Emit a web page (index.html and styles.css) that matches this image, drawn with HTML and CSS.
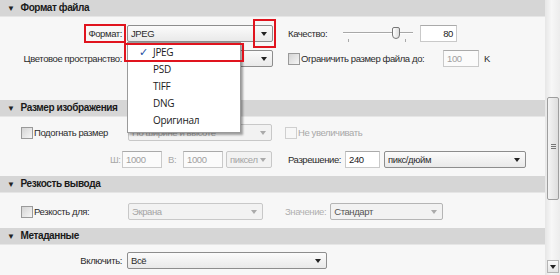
FILE: index.html
```html
<!DOCTYPE html>
<html lang="ru">
<head>
    <meta charset="UTF-8">
    <title>Экспорт</title>
    <link rel="stylesheet" href="styles.css">
</head>
<body>
    <div class="panel">
        <div class="sections">
            <!-- Формат файла -->
            <div class="sec">
                <div class="sec-head"><span class="tri">&#9660;</span>Формат файла</div>
                <div class="sec-body body-format">
                    <div class="row">
                        <div class="lbl"><span class="mark">Формат:</span></div>
                        <div class="combo w-146">
                            <span>JPEG</span><i class="arr"></i>
                            <div class="arr-mark"></div>
                            <ul class="list">
                                <li class="sel"><span class="chk">&#10003;</span>JPEG</li>
                                <li>PSD</li>
                                <li>TIFF</li>
                                <li>DNG</li>
                                <li>Оригинал</li>
                            </ul>
                        </div>
                        <div class="right">
                            <span class="rlbl">Качество:</span>
                            <div class="slider">
                                <div class="track"></div>
                                <div class="thumb"></div>
                                <i class="tick t1"></i><i class="tick t2"></i>
                            </div>
                            <div class="field num w-37">80</div>
                        </div>
                    </div>
                    <div class="row">
                        <div class="lbl">Цветовое пространство:</div>
                        <div class="combo w-146"><i class="arr"></i></div>
                        <div class="right">
                            <label class="cb limit-cb"><i class="box"></i>Ограничить размер файла до:</label>
                            <div class="field off w-36">100</div>
                            <span class="unit">K</span>
                        </div>
                    </div>
                </div>
            </div>

            <!-- Размер изображения -->
            <div class="sec">
                <div class="sec-head"><span class="tri">&#9660;</span>Размер изображения</div>
                <div class="sec-body body-size">
                    <div class="row">
                        <label class="cb first"><i class="box"></i>Подогнать размер</label>
                        <div class="combo off w-144"><span>По ширине и высоте</span><i class="arr"></i></div>
                        <label class="cb off right2"><i class="box"></i>Не увеличивать</label>
                    </div>
                    <div class="row">
                        <div class="dims">
                            <span class="dl d1">Ш:</span>
                            <div class="field off w-40">1000</div>
                            <span class="dl d2">В:</span>
                            <div class="field off w-40">1000</div>
                            <div class="combo off w-46"><span>пиксел</span><i class="arr"></i></div>
                        </div>
                        <div class="right res">
                            <span class="rlbl">Разрешение:</span>
                            <div class="field w-35">240</div>
                            <div class="combo w-142"><span>пикс/дюйм</span><i class="arr"></i></div>
                        </div>
                    </div>
                </div>
            </div>

            <!-- Резкость вывода -->
            <div class="sec">
                <div class="sec-head"><span class="tri">&#9660;</span>Резкость вывода</div>
                <div class="sec-body body-sharp">
                    <div class="row">
                        <label class="cb first"><i class="box"></i>Резкость для:</label>
                        <div class="combo off w-135"><span>Экрана</span><i class="arr"></i></div>
                        <div class="amount">
                            <span class="rlbl off">Значение:</span>
                            <div class="combo off w-113 dark"><span>Стандарт</span><i class="arr"></i></div>
                        </div>
                    </div>
                </div>
            </div>

            <!-- Метаданные -->
            <div class="sec">
                <div class="sec-head"><span class="tri">&#9660;</span>Метаданные</div>
                <div class="sec-body body-meta">
                    <div class="row">
                        <div class="lbl">Включить:</div>
                        <div class="combo w-200"><span>Всё</span><i class="arr"></i></div>
                    </div>
                </div>
            </div>
        </div>

        <div class="scrollbar">
            <div class="sb-thumb"><span class="grip"></span></div>
            <div class="sb-btn"><i class="arr"></i></div>
        </div>
    </div>
</body>
</html>
```

FILE: styles.css
```css
/* Панель экспорта */
* {
    box-sizing: border-box;
}
body {
    margin: 0;
    font-family: "Liberation Sans", Arial, sans-serif;
    font-size: 9.5px;
    letter-spacing: -0.4px;
    color: #2b2b2b;
    background-color: #f4f4f4;
    overflow: hidden;
}
.panel {
    display: flex;
    width: 560px;
    height: 275px;
}
.sections {
    width: 545px;
}
.sec-head {
    height: 17px;
    line-height: 16px;
    background-color: #d6d6d6;
    border-bottom: 1px solid #e6e6e6;
    font-weight: bold;
    font-size: 10px;
    color: #1a1a1a;
    padding-left: 7px;
}
.tri {
    font-size: 8px;
    margin-right: 6px;
    color: #222;
}
.sec-body {
    background-color: #f7f7f7;
    position: relative;
}
.body-format {
    height: 83px;
    padding-top: 8px;
}
.body-size {
    height: 59px;
    padding-top: 7px;
}
.body-sharp {
    height: 35px;
    padding-top: 10px;
}
.body-meta {
    height: 30px;
    padding-top: 7px;
}
.row {
    display: flex;
    align-items: center;
    height: 17px;
    margin-bottom: 8px;
}
.body-size .row {
    margin-bottom: 10px;
}
.lbl {
    width: 127px;
    text-align: right;
    padding-right: 5px;
    white-space: nowrap;
}
.mark {
    outline: 2px solid #e0141e;
    outline-offset: 2px;
    padding: 0;
}

/* Поля */
.combo {
    position: relative;
    height: 17px;
    line-height: 15px;
    border: 1px solid #8d8d8d;
    border-radius: 2px;
    background: linear-gradient(#fbfbfb, #e9e9e9);
    padding-left: 3px;
    white-space: nowrap;
}
.combo.off {
    border-color: #c8c8c8;
    background: #f2f2f2;
    color: #a4a4a4;
}
.combo.off.dark {
    color: #555;
    border-color: #b5b5b5;
}
.arr {
    position: absolute;
    right: 5px;
    top: 6px;
    width: 0;
    height: 0;
    border-left: 3px solid transparent;
    border-right: 3px solid transparent;
    border-top: 4px solid #222;
}
.combo.off .arr {
    border-top-color: #aaa;
}
.w-146 { width: 146px; }
.w-144 { width: 144px; }
.w-46 { width: 46px; }
.w-142 { width: 142px; }
.w-135 { width: 135px; }
.w-113 { width: 113px; }
.w-200 { width: 200px; }
.w-37 { width: 37px; }
.w-36 { width: 36px; }
.w-40 { width: 40px; }
.w-35 { width: 35px; }

.field {
    height: 17px;
    line-height: 15px;
    border: 1px solid #c9c9c9;
    border-top-color: #aaa;
    background-color: #fff;
    padding: 0 3px;
    color: #222;
}
.field.num {
    text-align: right;
}
.field.off {
    color: #a0a0a0;
    background-color: #fbfbfb;
}

/* Правая колонка */
.right {
    display: flex;
    align-items: center;
    margin-left: 15px;
}
.rlbl {
    width: 55px;
    white-space: nowrap;
}
.rlbl.off {
    color: #b0b0b0;
    width: auto;
    margin-right: 4px;
}
.slider {
    position: relative;
    width: 70px;
    height: 17px;
    margin-right: 7px;
}
.track {
    position: absolute;
    left: 0;
    right: 0;
    top: 7px;
    height: 2px;
    background-color: #a8a8a8;
    border-bottom: 1px solid #fff;
}
.thumb {
    position: absolute;
    left: 49px;
    top: 2px;
    width: 8px;
    height: 12px;
    border: 1px solid #777;
    border-radius: 2px 2px 4px 4px;
    background: linear-gradient(to right, #fff, #ddd);
}
.tick {
    position: absolute;
    top: 14px;
    width: 1px;
    height: 3px;
    background-color: #aaa;
}
.t1 { left: 5px; }
.t2 { left: 62px; }

.cb {
    display: flex;
    align-items: center;
    white-space: nowrap;
}
.box {
    width: 12px;
    height: 12px;
    border: 1px solid #9a9a9a;
    background: linear-gradient(135deg, #d4d4d4, #f6f6f6);
    margin-right: 1px;
    flex-shrink: 0;
}
.cb.off {
    color: #a8a8a8;
}
.cb.off .box {
    border-color: #cfcfcf;
    background: #f7f7f7;
}
.limit-cb {
    width: 155px;
}
.unit {
    margin-left: 5px;
}
.cb.first {
    width: 107px;
    margin-left: 21px;
}
.right2 {
    margin-left: 13px;
}
.dims {
    display: flex;
    align-items: center;
    margin-left: 110px;
}
.dl {
    color: #a8a8a8;
}
.d1 { width: 12px; }
.d2 { width: 15px; margin-left: 6px; }
.dims .combo {
    margin-left: 3px;
}
.res {
    margin-left: 16px;
}
.res .field {
    margin-left: 2px;
    margin-right: 4px;
}
.amount {
    display: flex;
    align-items: center;
    margin-left: 22px;
}

/* Выпадающий список */
.arr-mark {
    position: absolute;
    right: -4px;
    top: -7px;
    width: 23px;
    height: 29px;
    border: 2px solid #e0141e;
}
.list {
    position: absolute;
    left: -1px;
    top: 16px;
    width: 114px;
    margin: 0;
    padding: 1px 0 3px;
    list-style: none;
    background-color: #fff;
    border: 1px solid #9a9a9a;
    box-shadow: 2px 2px 2px rgba(0, 0, 0, 0.35);
    font-family: "Open Sans", sans-serif;
    font-size: 10px;
    letter-spacing: -0.3px;
    color: #222;
    z-index: 5;
}
.list li {
    height: 17px;
    line-height: 17px;
    padding-left: 25px;
    position: relative;
}
.list li.sel {
    outline: 2px solid #e0141e;
    outline-offset: -1px;
    margin: 0 -3px;
    padding-left: 28px;
}
.chk {
    position: absolute;
    left: 14px;
    color: #1f4fa3;
    font-family: "DejaVu Sans", sans-serif;
    font-size: 11px;
}

/* Полоса прокрутки */
.scrollbar {
    position: relative;
    width: 15px;
    border-left: 1px solid #e8e8e8;
    background: linear-gradient(to right, #e9e9e9, #f7f7f7 40%, #ececec);
}
.sb-thumb {
    position: absolute;
    left: 1px;
    top: 97px;
    width: 12px;
    height: 103px;
    border: 1px solid #9e9e9e;
    border-radius: 2px;
    background: linear-gradient(to right, #f4f4f4, #dedede);
}
.grip {
    position: absolute;
    left: 3px;
    top: 46px;
    width: 5px;
    height: 5px;
    border-top: 1px solid #777;
    border-bottom: 1px solid #777;
}
.grip::after {
    content: "";
    position: absolute;
    left: 0;
    top: 1px;
    width: 5px;
    height: 1px;
    background-color: #777;
}
.sb-btn {
    position: absolute;
    left: 1px;
    bottom: 2px;
    width: 12px;
    height: 13px;
    border: 1px solid #b5b5b5;
    background: linear-gradient(#fafafa, #e4e4e4);
}
.sb-btn .arr {
    right: 2px;
    top: 4px;
}
```
